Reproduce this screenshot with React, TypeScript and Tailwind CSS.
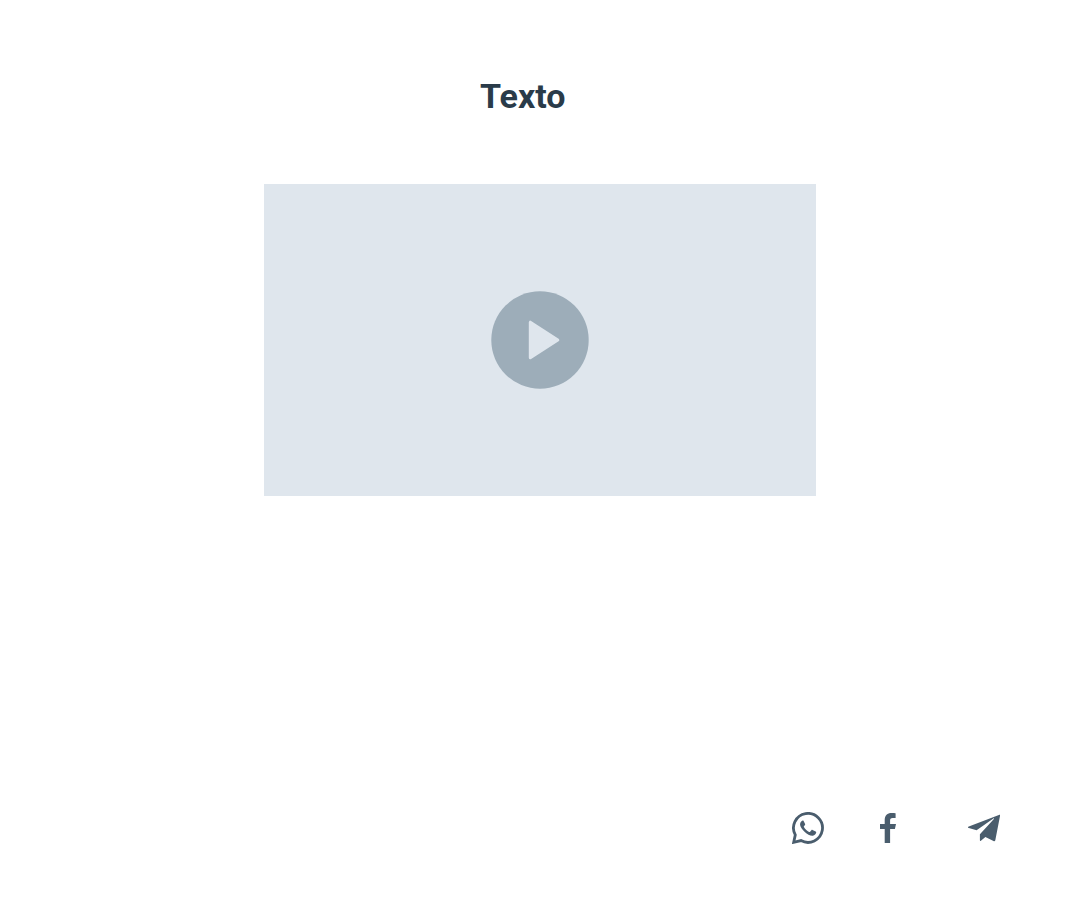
import type { ReactNode } from 'react';

type Share = { label: string; href: string; icon: ReactNode };

const shares: Share[] = [
  {
    label: 'WhatsApp',
    href: '#whatsapp',
    icon: (
      <svg viewBox="0 0 32 32" className="size-8" aria-hidden="true">
        <path
          d="M1.7 30.3 3.3 22.9A14.5 14.5 0 1 1 9 28.6Z"
          fill="none"
          stroke="currentColor"
          strokeWidth="2.8"
        />
        <path
          d="M11.5 8.7C11.2 8.2 10.7 8.4 10.2 8.7C8.7 9.7 7.9 11.2 8.1 13C8.5 15.2 10.4 17.9 12.8 20.1C15.2 22.4 18.5 24.1 20.8 23.8C22.7 23.4 24 22 24.2 20.5C24.3 20 24.1 19.7 23.7 19.5L20.5 17.9C20.1 17.7 19.7 17.8 19.4 18.2L18.1 19.8C17.8 20.1 17.5 20.2 17.1 20C14.8 19 13 17.2 11.9 15.1C11.7 14.7 11.8 14.4 12.1 14L13 12.9C13.2 12.6 13.2 12.3 13.1 12Z"
          fill="currentColor"
        />
      </svg>
    ),
  },
  {
    label: 'Facebook',
    href: '#facebook',
    icon: (
      <svg viewBox="0 0 32 32" className="size-8" fill="currentColor" aria-hidden="true">
        <path d="M4.7 31V17.1H0V12H4.7V8C4.7 3.4 7.4 1 11.5 1C13.4 1 15.1 1.1 15.6 1.2V6H12.7C10.5 6 10.1 7.1 10.1 8.6V12H16L14.9 17.1H10.1V31Z" />
      </svg>
    ),
  },
  {
    label: 'Telegram',
    href: '#telegram',
    icon: (
      <svg viewBox="0 0 32 32" className="size-8" fill="currentColor" aria-hidden="true">
        <path d="M30.9 2.9C31.7 2.5 32.2 3 32 3.9L27.3 28.2C27.1 29.2 26.4 29.5 25.5 29.1L17.4 24.9L12.9 28.7C12.4 29.2 11.9 29 11.9 28.3V22.2L25.9 6.9C26.3 6.4 25.9 6.2 25.4 6.5L8.6 18.2L0.8 16.1C-.2 15.8-.2 15 .8 14.6Z" />
      </svg>
    ),
  },
];

export default function App() {
  return (
    <div className="flex min-h-screen flex-col bg-white font-['Roboto',sans-serif]">
      <main className="flex grow flex-col items-center px-6 pt-[76px]">
        <h1 className="w-30 text-[34px] leading-10 font-bold text-[#2a3b49]">Texto</h1>
        <section
          aria-label="Video"
          className="mt-[68px] flex h-78 w-full max-w-[552px] items-center justify-center bg-[#dfe6ed]"
        >
          <button type="button" aria-label="Play" className="rounded-full text-[#9dadb9]">
            <svg viewBox="0 0 98 98" className="size-[98px]" aria-hidden="true">
              <circle cx="49" cy="49" r="48.7" fill="currentColor" />
              <path
                d="M39.3 31.2V66.8L66.8 49Z"
                fill="#dfe6ed"
                stroke="#dfe6ed"
                strokeWidth="3"
                strokeLinejoin="round"
              />
            </svg>
          </button>
        </section>
      </main>
      <footer className="flex justify-end gap-14 p-20 text-[#4a5d6d]">
        {shares.map((share) => (
          <a key={share.label} href={share.href} aria-label={share.label}>
            {share.icon}
          </a>
        ))}
      </footer>
    </div>
  );
}
